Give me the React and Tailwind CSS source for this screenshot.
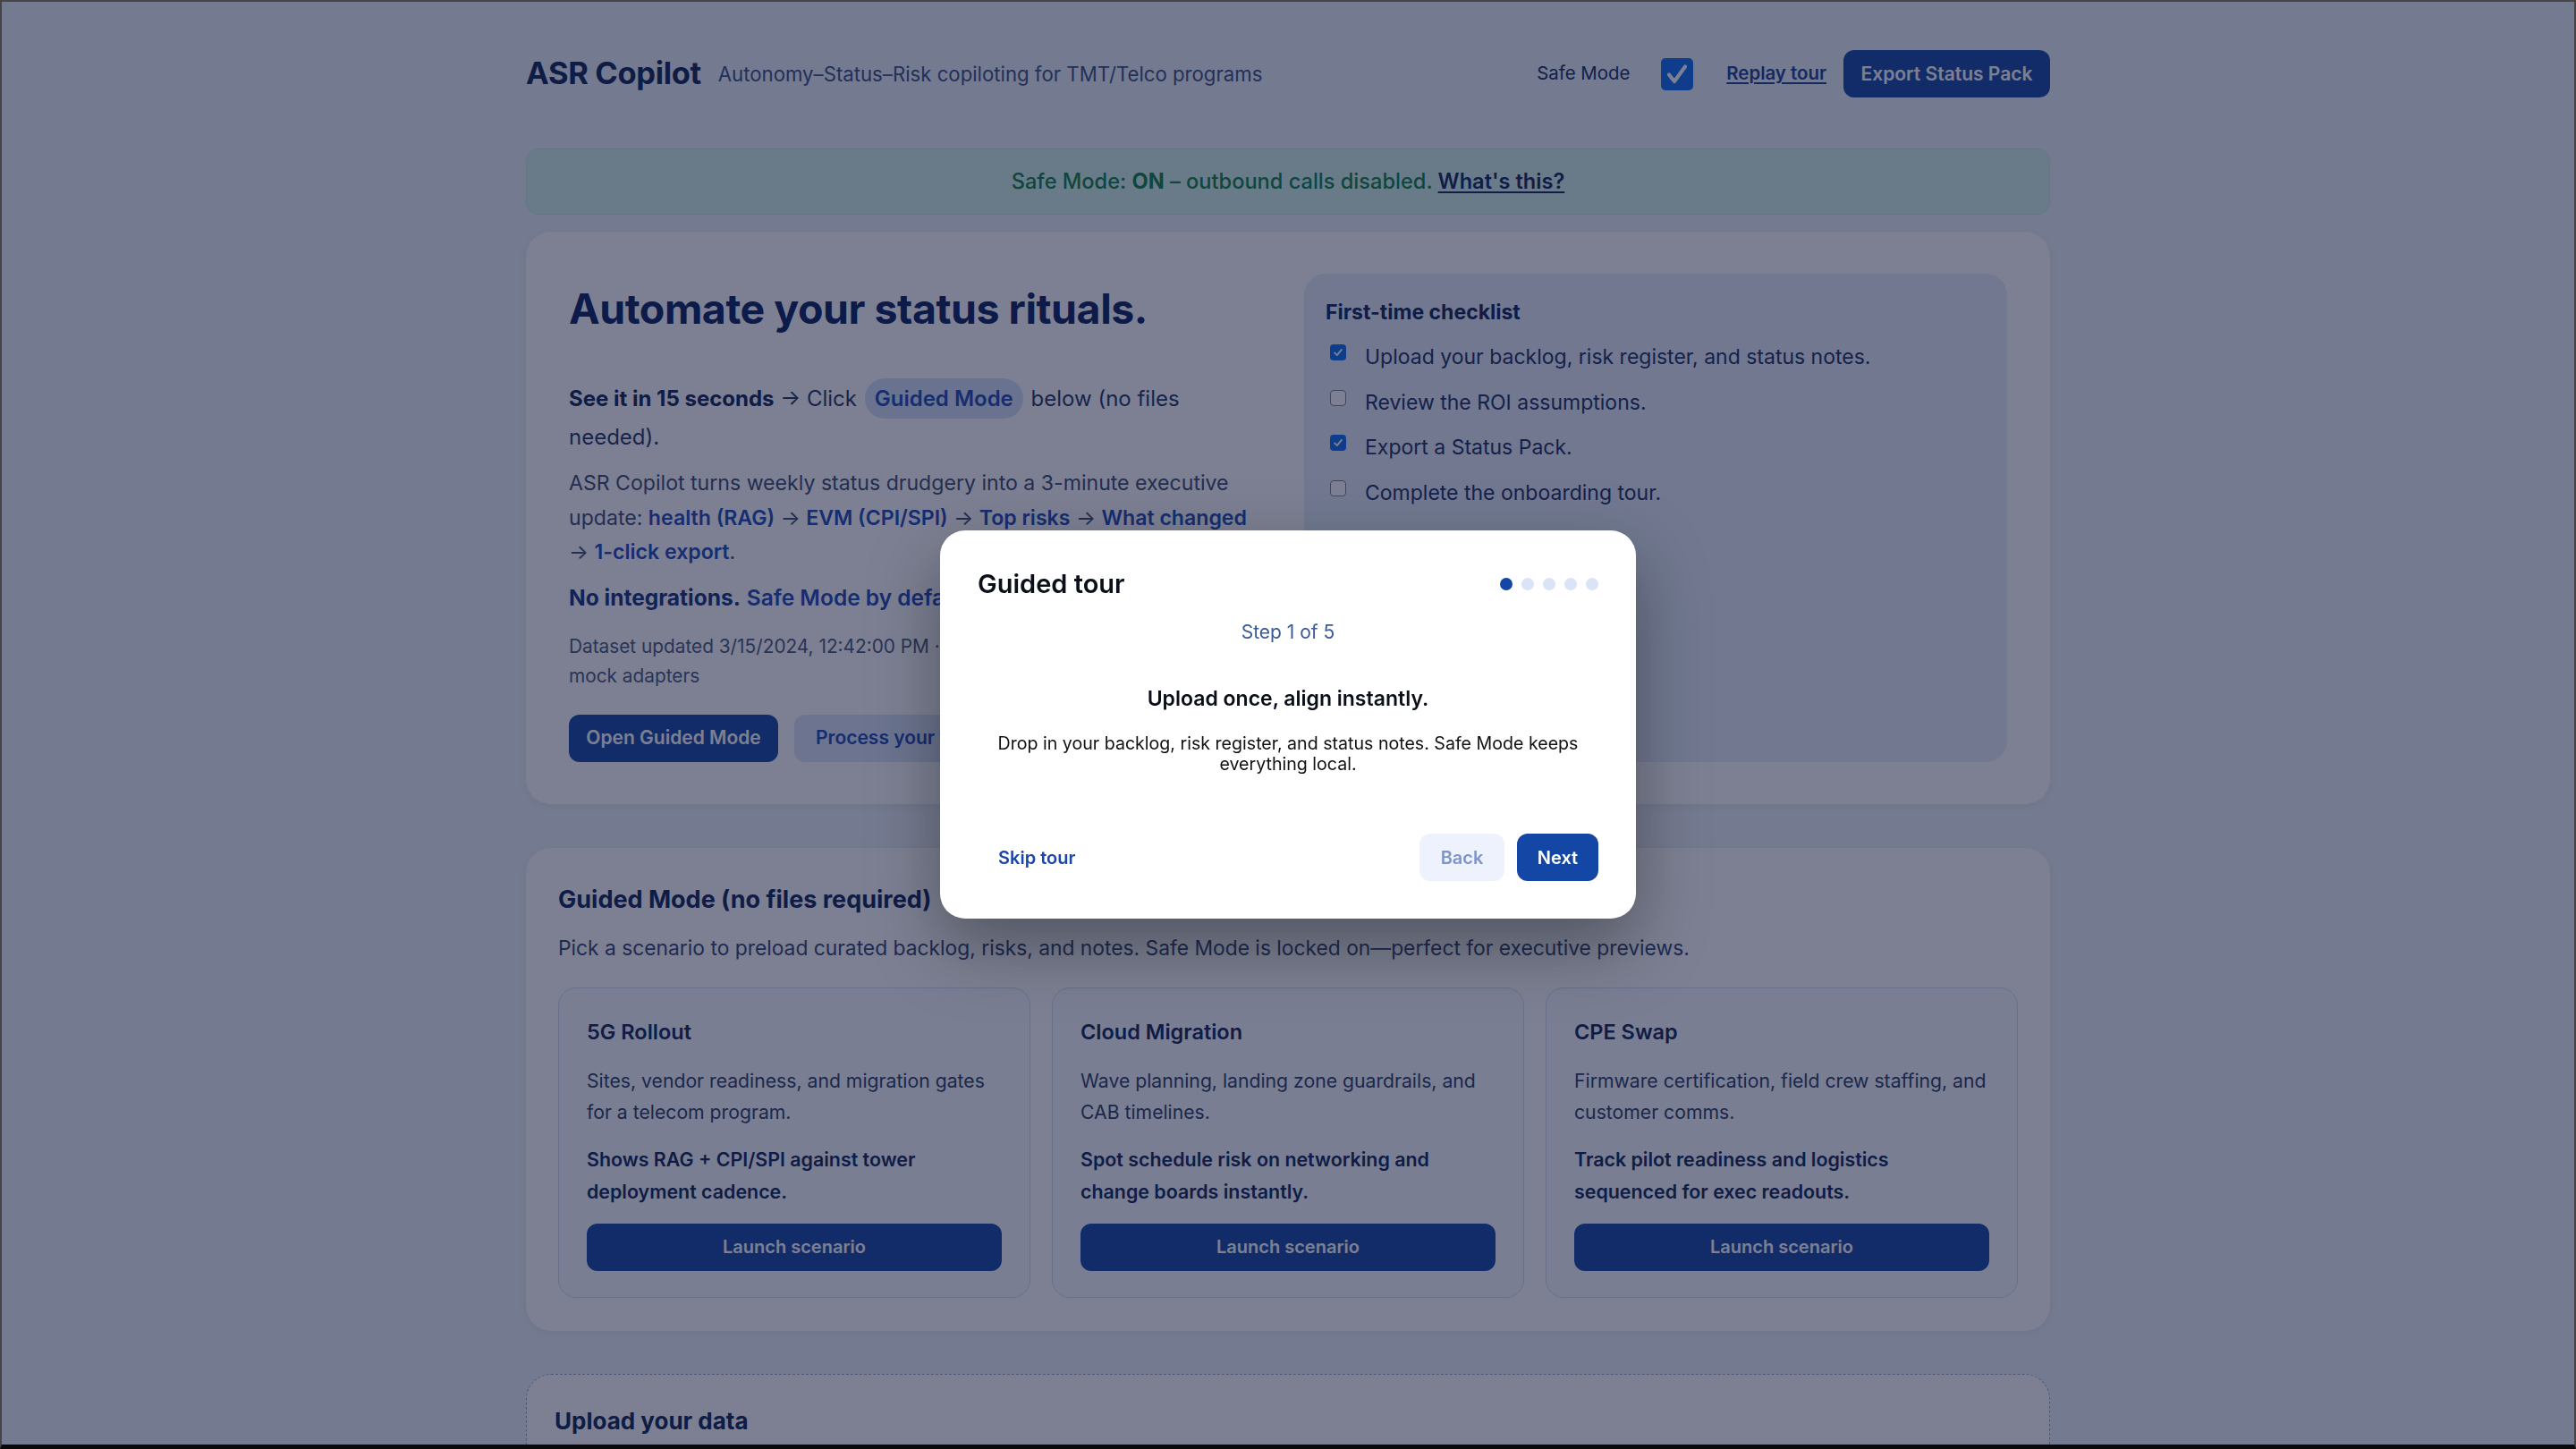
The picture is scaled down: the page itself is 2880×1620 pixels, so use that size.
import React from "react";

function Check({ checked, className = "" }) {
  return checked ? (
    <span className={`flex shrink-0 items-center justify-center rounded-[4px] bg-[#0b6cf0] ${className}`}>
      <svg viewBox="0 0 18 18" className="h-[14px] w-[14px]">
        <polyline points="4,9.5 7.5,13 14,5" fill="none" stroke="#fff" strokeWidth="2.4" strokeLinecap="round" strokeLinejoin="round" />
      </svg>
    </span>
  ) : (
    <span className={`shrink-0 rounded-[4px] border-[1.5px] border-[#7c7f86] bg-white ${className}`} />
  );
}

const scenarios = [
  {
    title: "5G Rollout",
    desc: ["Sites, vendor readiness, and migration gates", "for a telecom program."],
    bold: ["Shows RAG + CPI/SPI against tower", "deployment cadence."],
  },
  {
    title: "Cloud Migration",
    desc: ["Wave planning, landing zone guardrails, and", "CAB timelines."],
    bold: ["Spot schedule risk on networking and", "change boards instantly."],
  },
  {
    title: "CPE Swap",
    desc: ["Firmware certification, field crew staffing, and", "customer comms."],
    bold: ["Track pilot readiness and logistics", "sequenced for exec readouts."],
  },
];

const checklist = [
  { label: "Upload your backlog, risk register, and status notes.", checked: true },
  { label: "Review the ROI assumptions.", checked: false },
  { label: "Export a Status Pack.", checked: true },
  { label: "Complete the onboarding tour.", checked: false },
];

export default function App() {
  return (
    <div className="min-h-[1620px] bg-[#eef2f8] font-[Inter,'Noto_Sans',sans-serif] text-[#0d2257]">
      <div className="mx-auto w-[1704px] pt-[56px] pb-[120px]">
        {/* Header */}
        <header className="flex h-[53px] items-center justify-between">
          <div className="flex items-center gap-[19px]">
            <h1 className="text-[34.5px] font-bold leading-none tracking-[-0.01em] text-[#0c2358]">ASR Copilot</h1>
            <p className="text-[22.2px] text-[#3a4f82]">Autonomy–Status–Risk copiloting for TMT/Telco programs</p>
          </div>
          <div className="flex items-center">
            <span className="text-[20.4px] text-[#122a5e]">Safe Mode</span>
            <span className="ml-[35px] flex h-[36px] w-[36px] items-center justify-center rounded-[5px] bg-[#0b6cf0]">
              <svg viewBox="0 0 36 36" className="h-[36px] w-[36px]">
                <polyline points="9,18.5 15,26 27,9.5" fill="none" stroke="#fff" strokeWidth="4.2" strokeLinecap="round" strokeLinejoin="round" />
              </svg>
            </span>
            <a className="ml-[37px] text-[20.4px] font-semibold text-[#1c3d8f] underline underline-offset-[3px]">Replay tour</a>
            <button className="ml-[19px] h-[53px] w-[231px] rounded-[12px] bg-[#1446a6] text-[21px] font-semibold text-white">
              Export Status Pack
            </button>
          </div>
        </header>

        {/* Safe mode banner */}
        <div className="mt-[57px] flex h-[74px] items-center justify-center rounded-[14px] border border-[#c6ecdc] bg-[#d6f3ea] text-[23.6px] font-medium text-[#0f7f45]">
          <span>
            Safe Mode: <span className="font-bold">ON</span> – outbound calls disabled.{" "}
            <a className="font-semibold text-[#10245e] underline underline-offset-[3px]">What's this?</a>
          </span>
        </div>

        {/* Hero card */}
        <section className="mt-[19px] grid grid-cols-[780px_1fr] gap-[42px] rounded-[28px] bg-white px-[48px] py-[47px] shadow-[0_2px_10px_rgba(15,23,42,0.06)]">
          <div>
            <h2 className="mt-[12px] text-[46.5px] font-bold leading-[55px] tracking-[-0.01em] text-[#0a2160]">
              Automate your status rituals.
            </h2>
            <p className="mt-[51px] text-[24px] leading-[43px] text-[#23345f]">
              <span className="font-bold text-[#0d2257]">See it in 15 seconds</span> → Click{" "}
              <span className="mx-[2px] rounded-[22px] bg-[#d5e1f8] px-[11px] py-[8px] font-semibold text-[#1e47b5]">Guided Mode</span>{" "}
              below (no files
              <br />
              needed).
            </p>
            <p className="mt-[11px] text-[23.1px] leading-[38.5px] text-[#3a4970]">
              ASR Copilot turns weekly status drudgery into a 3-minute executive
              <br />
              update: <span className="font-semibold text-[#1e47b5]">health (RAG)</span> →{" "}
              <span className="font-semibold text-[#1e47b5]">EVM (CPI/SPI)</span> →{" "}
              <span className="font-semibold text-[#1e47b5]">Top risks</span> →{" "}
              <span className="font-semibold text-[#1e47b5]">What changed</span>
              <br />→ <span className="font-semibold text-[#1e47b5]">1-click export</span>.
            </p>
            <p className="mt-[12px] text-[24.5px] leading-[38px]">
              <span className="font-bold text-[#13307d]">No integrations.</span>{" "}
              <span className="font-semibold text-[#1e47b5]">Safe Mode by default.</span>
            </p>
            <p className="mt-[19px] text-[20.8px] leading-[33px] text-[#4a5878]">
              Dataset updated 3/15/2024, 12:42:00 PM · Source: bundled sample data via
              <br />
              mock adapters
            </p>
            <div className="mt-[27px] flex gap-[18px]">
              <button className="h-[53px] w-[234px] rounded-[12px] bg-[#1446a6] text-[21px] font-semibold text-white">
                Open Guided Mode
              </button>
              <button className="h-[53px] rounded-[12px] bg-[#dbe5f8] px-[24px] text-[21px] font-semibold text-[#1e47b5]">
                Process your files
              </button>
            </div>
          </div>
          <div className="rounded-[24px] bg-[#e6eefb] px-[24px] pt-[28px]">
            <h3 className="text-[23px] font-bold leading-[30px] text-[#0d2257]">First-time checklist</h3>
            <ul className="mt-[18px] flex flex-col gap-[16.7px]">
              {checklist.map((c) => (
                <li key={c.label} className="flex items-start">
                  <Check checked={c.checked} className="ml-[5px] mt-[3px] h-[18px] w-[18px]" />
                  <span className="ml-[21px] text-[23px] leading-[34px] text-[#1b2d5e]">{c.label}</span>
                </li>
              ))}
            </ul>
          </div>
        </section>

        {/* Guided mode */}
        <section className="mt-[49px] rounded-[28px] bg-white px-[36px] pt-[40px] pb-[37px] shadow-[0_2px_10px_rgba(15,23,42,0.06)]">
          <h2 className="text-[27px] font-bold leading-[36px] text-[#0d2257]">Guided Mode (no files required)</h2>
          <p className="mt-[19px] text-[22.8px] leading-[34px] text-[#34446e]">
            Pick a scenario to preload curated backlog, risks, and notes. Safe Mode is locked on—perfect for executive previews.
          </p>
          <div className="mt-[27px] grid grid-cols-3 gap-[24px]">
            {scenarios.map((s) => (
              <div key={s.title} className="flex h-[347px] flex-col rounded-[20px] border border-[#d3def0] bg-[#f8fafe] px-[31px] pt-[34px] pb-[29px]">
                <h3 className="text-[23.5px] font-semibold leading-[30px] text-[#0d2257]">{s.title}</h3>
                <p className="mt-[22px] whitespace-nowrap text-[21.2px] leading-[35px] text-[#2c3b63]">
                  {s.desc[0]}
                  <br />
                  {s.desc[1]}
                </p>
                <p className="mt-[17px] whitespace-nowrap text-[21.4px] font-semibold leading-[36px] text-[#0f2557]">
                  {s.bold[0]}
                  <br />
                  {s.bold[1]}
                </p>
                <button className="mt-auto h-[53px] w-full rounded-[12px] bg-[#1446a6] text-[20px] font-semibold text-white">
                  Launch scenario
                </button>
              </div>
            ))}
          </div>
        </section>

        {/* Upload */}
        <section className="mt-[48px] rounded-[28px] border border-dashed border-[#97a6c4] bg-white px-[31px] pt-[35px] pb-[40px]">
          <h2 className="text-[26px] font-bold leading-[34px] text-[#0d2257]">Upload your data</h2>
          <p className="mt-[16px] text-[22px] leading-[34px] text-[#34446e]">
            Drop CSV or XLSX files for your backlog, risk register, and status notes. Everything stays in your browser.
          </p>
          <div className="mt-[24px] grid grid-cols-3 gap-[24px]">
            {["Backlog", "Risk register", "Status notes"].map((t) => (
              <div key={t} className="flex h-[160px] items-center justify-center rounded-[20px] border border-dashed border-[#b7c4dd] text-[21px] text-[#34446e]">
                {t}
              </div>
            ))}
          </div>
        </section>
      </div>

      {/* Overlay + modal */}
      <div className="fixed inset-0 z-40 flex items-center justify-center bg-[rgba(17,24,56,0.55)]">
        <div className="flex h-[434px] w-[778px] flex-col rounded-[28px] bg-white px-[42px] pt-[42px] pb-[42px] shadow-[0_30px_80px_rgba(0,0,0,0.35)]">
          <div className="flex h-[35px] items-center justify-between">
            <h2 className="text-[29px] font-semibold leading-[35px] text-[#0b0f19]">Guided tour</h2>
            <div className="flex gap-[10px]">
              <span className="h-[14px] w-[14px] rounded-full bg-[#1446a6]" />
              <span className="h-[14px] w-[14px] rounded-full bg-[#dbe3f7]" />
              <span className="h-[14px] w-[14px] rounded-full bg-[#dbe3f7]" />
              <span className="h-[14px] w-[14px] rounded-full bg-[#dbe3f7]" />
              <span className="h-[14px] w-[14px] rounded-full bg-[#dbe3f7]" />
            </div>
          </div>
          <p className="mt-[23px] text-center text-[21px] leading-[28px] text-[#3c5a94]">Step 1 of 5</p>
          <h3 className="mt-[45px] text-center text-[23px] font-semibold leading-[30px] text-[#0b0f19]">
            Upload once, align instantly.
          </h3>
          <p className="mt-[24px] text-center text-[19.6px] leading-[22.5px] text-[#111]">
            Drop in your backlog, risk register, and status notes. Safe Mode keeps everything local.
          </p>
          <div className="mt-auto flex items-center justify-between">
            <button className="h-[53px] px-[23px] text-[20px] font-semibold text-[#1a46ad]">Skip tour</button>
            <div className="flex gap-[14px]">
              <button className="h-[53px] w-[95px] rounded-[12px] bg-[#eef2fc] text-[20px] font-semibold text-[#7f95c9]">Back</button>
              <button className="h-[53px] w-[91px] rounded-[12px] bg-[#1446a6] text-[20px] font-semibold text-white">Next</button>
            </div>
          </div>
        </div>
      </div>

      {/* window frame */}
      <div className="pointer-events-none fixed inset-0 z-50 border-x-2 border-t-2 border-b-[5px] border-[#454545] border-b-[#0a0a0a]" />
    </div>
  );
}
